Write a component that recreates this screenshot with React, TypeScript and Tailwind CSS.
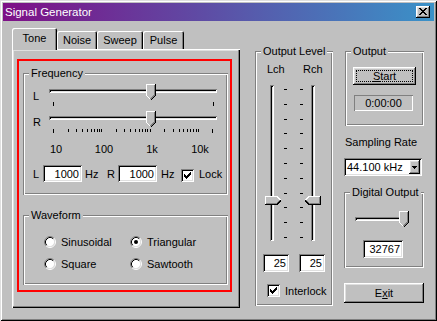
import React from "react";

const RAISED =
  "shadow-[inset_-1px_-1px_0_#000,inset_1px_1px_0_#fff,inset_-2px_-2px_0_#808080,inset_2px_2px_0_#dfdfdf]";
const SUNKEN =
  "shadow-[inset_1px_1px_0_#808080,inset_-1px_-1px_0_#fff,inset_2px_2px_0_#000,inset_-2px_-2px_0_#dfdfdf]";
const ETCHED =
  "shadow-[inset_1px_1px_0_#808080,inset_-1px_-1px_0_#fff,inset_2px_2px_0_#fff,inset_-2px_-2px_0_#808080]";
const THIN_SUNKEN = "shadow-[inset_1px_1px_0_#808080,inset_-1px_-1px_0_#fff]";
const TAB =
  "shadow-[inset_1px_1px_0_#fff,inset_-1px_0_0_#000,inset_-2px_0_0_#808080] rounded-t-[2px]";

function Group({
  label,
  className = "",
  children,
}: {
  label: string;
  className?: string;
  children?: React.ReactNode;
}) {
  return (
    <div className={`relative shrink-0 ${ETCHED} ${className}`}>
      <span className="absolute left-[6px] top-[-6px] px-[2px] bg-[#c0c0c0] leading-[12px] whitespace-nowrap">
        {label}
      </span>
      {children}
    </div>
  );
}

function ThumbDown() {
  return (
    <svg width="10" height="17" viewBox="0 0 10 17" shapeRendering="crispEdges">
      <path d="M0 0H10V11L5 16L0 11Z" fill="#c0c0c0" />
      <path d="M0.5 11.5V0.5H9" stroke="#fff" fill="none" />
      <path d="M0.5 11.5L4.5 15.5" stroke="#fff" fill="none" />
      <path d="M9.5 0V11.5L5 16" stroke="#000" fill="none" />
      <path d="M8.5 1V11L4.5 15" stroke="#808080" fill="none" />
    </svg>
  );
}

function ThumbRight() {
  return (
    <svg width="17" height="9" viewBox="0 0 17 9" shapeRendering="crispEdges">
      <path d="M0 0H12L16 4.5L12 9H0Z" fill="#c0c0c0" />
      <path d="M0.5 8V0.5H12L15.5 4" stroke="#fff" fill="none" />
      <path d="M0 8.5H12L16 4.5" stroke="#000" fill="none" />
      <path d="M1 7.5H11.5L14.5 4.5" stroke="#808080" fill="none" />
    </svg>
  );
}

function ThumbLeft() {
  return (
    <svg width="17" height="9" viewBox="0 0 17 9" shapeRendering="crispEdges">
      <path d="M17 0H5L1 4.5L5 9H17Z" fill="#c0c0c0" />
      <path d="M1.5 4L5 0.5H16" stroke="#fff" fill="none" />
      <path d="M16.5 0V8.5H5L1 4.5" stroke="#000" fill="none" />
      <path d="M15.5 1V7.5H5.5L2.5 4.5" stroke="#808080" fill="none" />
    </svg>
  );
}

function CheckBox() {
  const tops = [5, 6, 7, 6, 5, 4, 3];
  return (
    <div className={`${SUNKEN} bg-white w-[13px] h-[13px] shrink-0`}>
      <svg width="13" height="13" viewBox="0 0 13 13" shapeRendering="crispEdges">
        {tops.map((t, i) => (
          <rect key={i} x={3 + i} y={t} width={1} height={3} fill="#000" />
        ))}
      </svg>
    </div>
  );
}

function Radio({ checked }: { checked?: boolean }) {
  return (
    <svg width="12" height="12" viewBox="0 0 12 12" className="shrink-0">
      <circle cx="6" cy="6" r="4.5" fill="#fff" />
      <path d="M2.11 9.89A5.5 5.5 0 0 1 9.89 2.11" stroke="#808080" fill="none" />
      <path d="M9.89 2.11A5.5 5.5 0 0 1 2.11 9.89" stroke="#fff" fill="none" />
      <path d="M2.82 9.18A4.5 4.5 0 0 1 9.18 2.82" stroke="#000" fill="none" />
      <path d="M9.18 2.82A4.5 4.5 0 0 1 2.82 9.18" stroke="#dfdfdf" fill="none" />
      {checked && <circle cx="6" cy="6" r="2" fill="#000" />}
    </svg>
  );
}

function Field({ value, className = "" }: { value: string; className?: string }) {
  return (
    <div
      className={`${SUNKEN} bg-white flex items-center justify-end pr-[3px] leading-[12px] shrink-0 ${className}`}
    >
      {value}
    </div>
  );
}

function Track({ className = "" }: { className?: string }) {
  return <div className={`${SUNKEN} bg-[#dfdfdf] ${className}`} />;
}

function logTicks() {
  const fs: number[] = [];
  for (const d of [10, 100, 1000]) for (let k = 1; k <= 9; k++) fs.push(d * k);
  fs.push(10000, 20000);
  return fs.map((f) => ({
    x: Math.round(4 + 48.3 * Math.log10(f / 10)),
    end: f === 10 || f === 20000,
  }));
}

function HSlider({ log }: { log?: boolean }) {
  const ticks = log
    ? logTicks()
    : [
        { x: 4, end: true },
        { x: 164, end: true },
      ];
  return (
    <div className="relative w-[168px] h-[21px] shrink-0">
      <Track className="mt-[5px] h-[4px] w-[168px]" />
      <div className="absolute left-[97px] top-0">
        <ThumbDown />
      </div>
      <svg width="168" height="4" className="mt-[9px] block" shapeRendering="crispEdges">
        {ticks.map((t, i) => (
          <rect key={i} x={t.x} y={0} width={1} height={t.end ? 4 : 3} fill="#000" />
        ))}
      </svg>
    </div>
  );
}

function TitleBar() {
  const rows = [
    [0, 1, 6, 7],
    [1, 2, 5, 6],
    [2, 3, 4, 5],
    [3, 4],
    [2, 3, 4, 5],
    [1, 2, 5, 6],
    [0, 1, 6, 7],
  ];
  return (
    <div className="h-[18px] shrink-0 flex items-center pl-[2px] pr-[4px] bg-[linear-gradient(to_right,#7e0f86,#3a92c8)]">
      <span className="text-white text-[11.5px] leading-[12px]">Signal Generator</span>
      <div className={`ml-auto w-[14px] h-[12px] bg-[#c0c0c0] ${RAISED} pl-[3px] pt-[2px]`}>
        <svg width="8" height="7" viewBox="0 0 8 7" shapeRendering="crispEdges" className="block">
          {rows.map((r, y) =>
            r.map((x) => <rect key={`${x}-${y}`} x={x} y={y} width={1} height={1} fill="#000" />)
          )}
        </svg>
      </div>
    </div>
  );
}

function TabControl() {
  return (
    <div className="w-[228px] shrink-0 flex flex-col">
      <div className="flex h-[21px] items-end">
        <div
          className={`relative z-10 w-[45px] h-[22px] -mb-px bg-[#c0c0c0] ${TAB} flex justify-center pt-[4px] leading-[12px]`}
        >
          Tone
        </div>
        <div className={`w-[40px] h-[18px] ${TAB} flex justify-center pt-[3px] leading-[12px]`}>Noise</div>
        <div className={`w-[46px] h-[18px] ${TAB} flex justify-center pt-[3px] leading-[12px]`}>Sweep</div>
        <div className={`w-[41px] h-[18px] ${TAB} flex justify-center pt-[3px] leading-[12px]`}>Pulse</div>
      </div>
      <div
        className={`h-[259px] w-[228px] bg-[#c0c0c0] shadow-[inset_1px_1px_0_#fff,inset_-1px_-1px_0_#000,inset_-2px_-2px_0_#808080,inset_2px_2px_0_#dfdfdf] pl-[5px] pt-[10px]`}
      >
        <div className="w-[215px] h-[233px] border-2 border-[#ff0000] flex flex-col pl-[4px] pt-[12px]">
          <Group label="Frequency" className="w-[205px] h-[122px]">
            <div className="pt-[11px] flex flex-col">
              <div className="flex h-[27px]">
                <span className="w-[26px] pl-[10px] pt-[6px] leading-[12px]">L</span>
                <HSlider />
              </div>
              <div className="flex h-[24px]">
                <span className="w-[26px] pl-[10px] pt-[5px] leading-[12px]">R</span>
                <HSlider log />
              </div>
              <div className="flex mt-[8px] leading-[12px] pl-[18px] gap-[18px]">
                <span className="w-[30px] text-center">10</span>
                <span className="w-[30px] text-center">100</span>
                <span className="w-[30px] text-center">1k</span>
                <span className="w-[30px] text-center">10k</span>
              </div>
              <div className="flex items-center h-[17px] mt-[10px] leading-[12px]">
                <span className="w-[20px] pl-[10px] shrink-0">L</span>
                <Field value="1000" className="w-[39px] h-[17px]" />
                <span className="w-[25px] pl-[3px] shrink-0">Hz</span>
                <span className="w-[11px] shrink-0">R</span>
                <Field value="1000" className="w-[39px] h-[17px]" />
                <span className="w-[24px] pl-[4px] shrink-0">Hz</span>
                <div className="self-end">
                  <CheckBox />
                </div>
                <span className="pl-[5px]">Lock</span>
              </div>
            </div>
          </Group>
          <Group label="Waveform" className="w-[205px] h-[70px] mt-[20px]">
            <div className="grid grid-cols-[86px_86px] gap-y-[10px] pl-[21px] pt-[21px] leading-[12px]">
              <div className="flex items-center gap-[5px]">
                <Radio />
                <span>Sinusoidal</span>
              </div>
              <div className="flex items-center gap-[5px]">
                <Radio checked />
                <span>Triangular</span>
              </div>
              <div className="flex items-center gap-[5px]">
                <Radio />
                <span>Square</span>
              </div>
              <div className="flex items-center gap-[5px]">
                <Radio />
                <span>Sawtooth</span>
              </div>
            </div>
          </Group>
        </div>
      </div>
    </div>
  );
}

function OutputLevel() {
  const dashes = Array.from({ length: 11 }, (_, i) => 4 + Math.round(i * 14.8));
  return (
    <Group label="Output Level" className="ml-[15px] mt-[23px] w-[78px] h-[255px]">
      <div className="flex flex-col">
        <div className="flex pt-[12px] leading-[12px]">
          <span className="ml-[12px] w-[36px]">Lch</span>
          <span>Rch</span>
        </div>
        <div className="flex h-[156px] mt-[10px]">
          <div className="relative ml-[15px] w-[4px] h-[156px]">
            <Track className="w-[4px] h-[156px]" />
            <div className="absolute left-[-5px] top-[111px]">
              <ThumbRight />
            </div>
          </div>
          <svg width="19" height="156" className="ml-[10px] block" shapeRendering="crispEdges">
            {dashes.map((y) => (
              <g key={y}>
                <rect x={0} y={y} width={3} height={1} fill="#000" />
                <rect x={16} y={y} width={3} height={1} fill="#000" />
              </g>
            ))}
          </svg>
          <div className="relative ml-[8px] w-[4px] h-[156px]">
            <Track className="w-[4px] h-[156px]" />
            <div className="absolute left-[-7px] top-[111px]">
              <ThumbLeft />
            </div>
          </div>
        </div>
        <div className="flex mt-[13px]">
          <Field value="25" className="ml-[8px] w-[26px] h-[18px]" />
          <Field value="25" className="ml-[10px] w-[26px] h-[18px]" />
        </div>
        <div className="flex items-center mt-[12px] leading-[12px]">
          <div className="ml-[12px]">
            <CheckBox />
          </div>
          <span className="pl-[5px]">Interlock</span>
        </div>
      </div>
    </Group>
  );
}

function RightColumn() {
  return (
    <div className="ml-[11px] mt-[23px] w-[80px] shrink-0 flex flex-col">
      <Group label="Output" className="ml-[1px] w-[79px] h-[75px]">
        <div className="flex flex-col pt-[16px]">
          <div
            className={`ml-[8px] w-[63px] h-[18px] bg-[#c0c0c0] ${RAISED} p-[3px] flex`}
          >
            <div className="flex-1 border border-dotted border-black flex items-center justify-center leading-[12px]">
              <span>
                <span className="underline underline-offset-[1px]">S</span>tart
              </span>
            </div>
          </div>
          <div
            className={`ml-[9px] mt-[10px] w-[59px] h-[16px] ${THIN_SUNKEN} flex items-center justify-center leading-[12px]`}
          >
            0:00:00
          </div>
        </div>
      </Group>
      <div className="mt-[10px] h-[12px] leading-[12px] pl-[1px] whitespace-nowrap">Sampling Rate</div>
      <div className={`mt-[10px] w-[78px] h-[18px] ${SUNKEN} bg-white flex items-center p-[2px]`}>
        <span className="flex-1 pl-[1px] leading-[12px] whitespace-nowrap">44.100 kHz</span>
        <div className={`w-[11px] h-[14px] bg-[#c0c0c0] ${RAISED} flex items-center justify-center`}>
          <svg width="5" height="3" viewBox="0 0 5 3" shapeRendering="crispEdges" className="block">
            <rect x="0" y="0" width="5" height="1" fill="#000" />
            <rect x="1" y="1" width="3" height="1" fill="#000" />
            <rect x="2" y="2" width="1" height="1" fill="#000" />
          </svg>
        </div>
      </div>
      <Group label="Digital Output" className="mt-[16px] w-[80px] h-[76px]">
        <div className="flex flex-col pt-[25px]">
          <div className="relative ml-[11px] w-[45px] h-[4px]">
            <Track className="w-[45px] h-[4px]" />
            <div className="absolute left-[44px] top-[-6px]">
              <ThumbDown />
            </div>
          </div>
          <Field value="32767" className="ml-[19px] mt-[19px] w-[40px] h-[18px]" />
        </div>
      </Group>
      <div
        className={`mt-[15px] w-[80px] h-[20px] bg-[#c0c0c0] ${RAISED} flex items-center justify-center leading-[12px]`}
      >
        <span>
          E<span className="underline underline-offset-[1px]">x</span>it
        </span>
      </div>
    </div>
  );
}

export default function App() {
  return (
    <div className="w-[437px] h-[321px] bg-[#c0c0c0] p-[3px] flex flex-col text-[11px] text-black font-['Liberation_Sans',Arial,sans-serif] shadow-[inset_1px_1px_0_#dfdfdf,inset_-1px_-1px_0_#000,inset_2px_2px_0_#fff,inset_-2px_-2px_0_#808080] overflow-hidden">
      <TitleBar />
      <div className="flex flex-1 pl-[9px] pt-[7px]">
        <TabControl />
        <OutputLevel />
        <RightColumn />
      </div>
    </div>
  );
}
